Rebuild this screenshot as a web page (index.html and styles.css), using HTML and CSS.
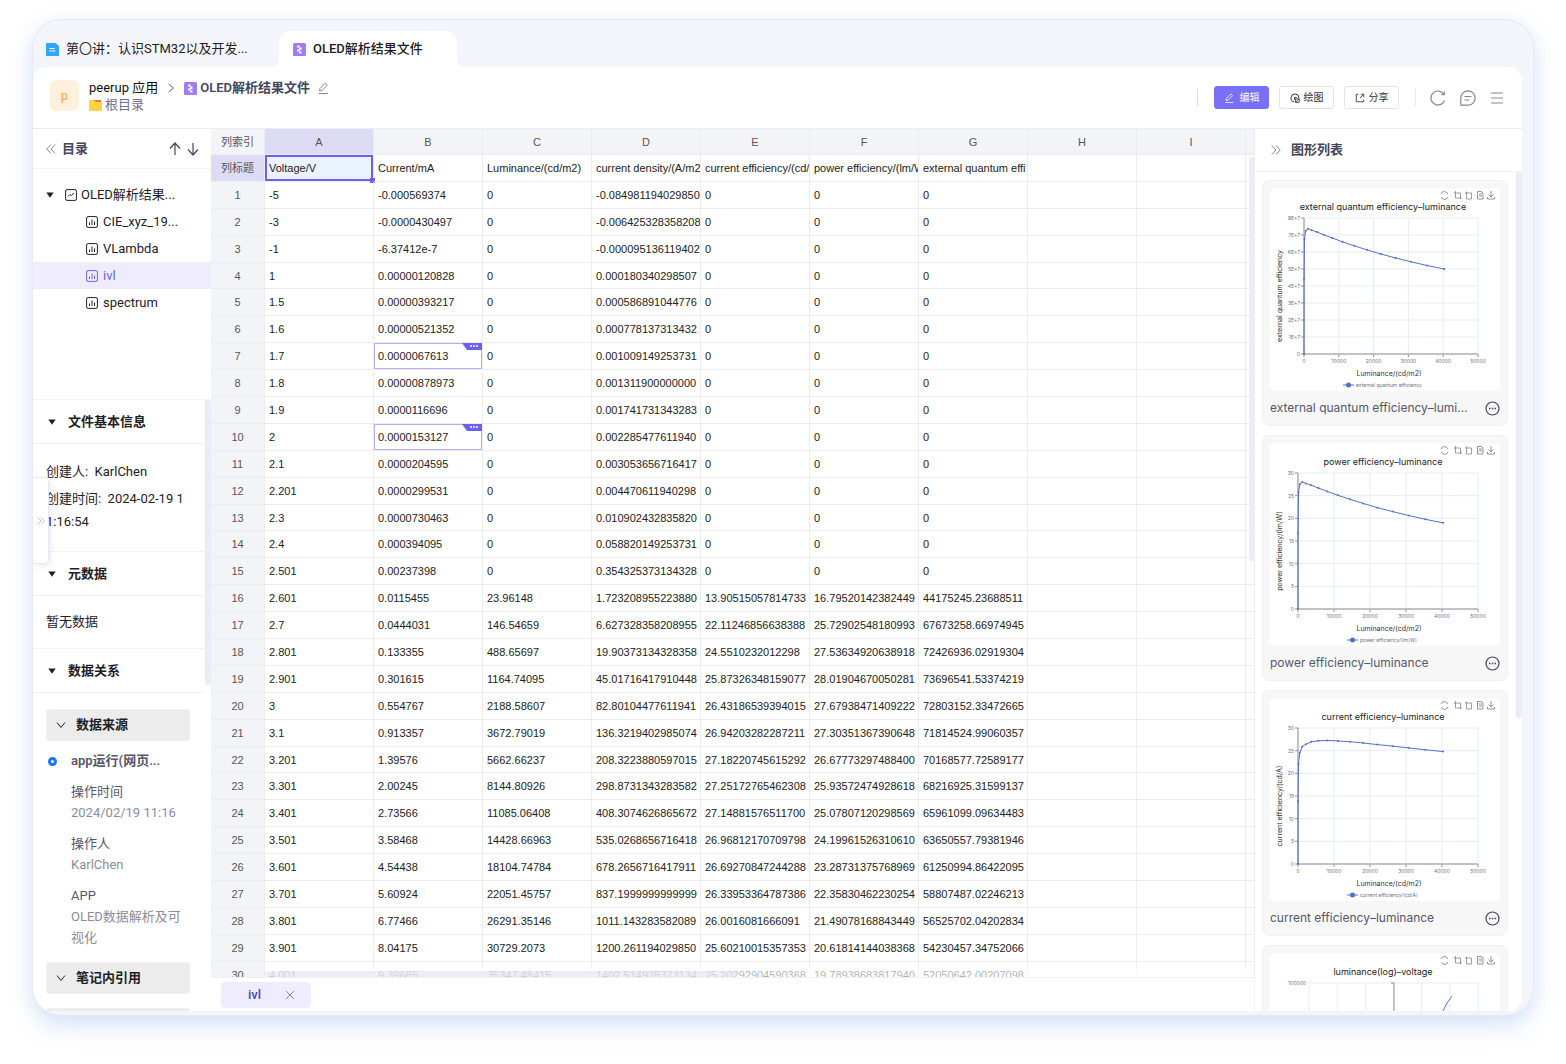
FILE: index.html
```html
<!DOCTYPE html>
<html lang="zh-CN">
<head>
<meta charset="utf-8">
<title>OLED解析结果文件</title>
<meta name="viewport" content="width=device-width, initial-scale=1">
<link rel="stylesheet" href="styles.css">
</head>
<body>
<svg class="defs" aria-hidden="true">
  <symbol id="i-file" viewBox="0 0 13 13"><path d="M1 0h8.500L13 3v9a1 1 0 0 1-1 1H1a1 1 0 0 1-1-1V1a1 1 0 0 1 1-1z" fill="#30a5fb"/><path d="M3.500 5.500h5M3.500 8h6" stroke="#fff" fill="none"/></symbol>
  <symbol id="i-data" viewBox="0 0 13 13"><rect width="13" height="13" rx="1.500" fill="#a07bfb"/><path d="M4 2.500h2.500v2H8.500V7H6.500v1.500h2v2H6v-2H4V6.500h2v-2H4z" fill="#fff"/></symbol>
  <symbol id="i-folder" viewBox="0 0 13 13"><path d="M5 1h7v3H5z" fill="#fb6a55"/><path d="M1 1h4l2 2h5a1 1 0 0 1 1 1v7a1 1 0 0 1-1 1H1a1 1 0 0 1-1-1V2a1 1 0 0 1 1-1z" fill="#fed53f"/></symbol>
  <symbol id="i-pencil" viewBox="0 0 12 12"><path d="M1.500 11.500h9.500M2.500 9l.5-2.500L8.300 1.200l2 2L5 8.500z" fill="none" stroke="currentColor" stroke-linejoin="round"/></symbol>
  <symbol id="i-plot" viewBox="0 0 12 12"><path d="M5 10.700A4.800 4.800 0 1 1 10.800 6M5.500 8V5.500h2.500" fill="none" stroke="currentColor" stroke-width="1.200"/><path d="M6.700 7h4.300v4.200H6.700zM6.700 11l4.300-4" fill="none" stroke="currentColor"/></symbol>
  <symbol id="i-share" viewBox="0 0 12 12"><path d="M4 1.500H1.500v9h9V8M7 1.500h3.500V5M10.200 1.800 6 6" fill="none" stroke="currentColor"/></symbol>
  <symbol id="i-refresh" viewBox="0 0 16 16"><path d="M14 4.500A7 7 0 1 0 14.500 10.500M14.300 1.500v3.200h-3" fill="none" stroke="currentColor" stroke-width="1.200"/></symbol>
  <symbol id="i-comment" viewBox="0 0 16 16"><path d="M8 .8a7.200 7.200 0 1 1 0 14.400H.8V8A7.200 7.200 0 0 1 8 .8zM4.500 6.500h7M4.500 10h4.500" fill="none" stroke="currentColor" stroke-width="1.200"/></symbol>
  <symbol id="i-menu" viewBox="0 0 14 14"><path d="M1 2h12M1 7h12M1 12h12" stroke="currentColor" stroke-width="1.200"/></symbol>
  <symbol id="i-dleft" viewBox="0 0 10 10"><path d="M5 .5.8 5 5 9.500M9.200.5 5 5l4.200 4.500" fill="none" stroke="currentColor"/></symbol>
  <symbol id="i-dright" viewBox="0 0 10 10"><path d="M.8.500 5 5 .8 9.500M5 .5 9.200 5 5 9.500" fill="none" stroke="currentColor"/></symbol>
  <symbol id="i-right" viewBox="0 0 8 10"><path d="M1.500 1 6.500 5l-5 4" fill="none" stroke="currentColor"/></symbol>
  <symbol id="i-down" viewBox="0 0 10 10"><path d="M1 2.500 5 7.500l4-5" fill="none" stroke="currentColor"/></symbol>
  <symbol id="i-up-arrow" viewBox="0 0 12 14"><path d="M6 13V1M1 6.500 6 1l5 5.500" fill="none" stroke="currentColor" stroke-width="1.200"/></symbol>
  <symbol id="i-down-arrow" viewBox="0 0 12 14"><path d="M6 1v12M1 7.500 6 13l5-5.500" fill="none" stroke="currentColor" stroke-width="1.200"/></symbol>
  <symbol id="i-caret" viewBox="0 0 8 6"><path d="M.3.500h7.400L4 5.800z" fill="currentColor"/></symbol>
  <symbol id="i-line" viewBox="0 0 12 12"><rect x=".6" y=".6" width="10.800" height="10.800" rx="1.500" fill="none" stroke="currentColor"/><path d="M3 7.500 5 5.500l1.500 1L9 4.200" fill="none" stroke="currentColor"/></symbol>
  <symbol id="i-bars" viewBox="0 0 12 12"><rect x=".6" y=".6" width="10.800" height="10.800" rx="1.500" fill="none" stroke="currentColor"/><path d="M3.500 9V6.500M6 9V3.500M8.500 9V5.500" stroke="currentColor"/></symbol>
  <symbol id="i-close" viewBox="0 0 10 10"><path d="m1 1 8 8M9 1 1 9" stroke="currentColor"/></symbol>
  <symbol id="i-more" viewBox="0 0 15 15"><circle cx="7.500" cy="7.500" r="6.500" fill="none" stroke="currentColor" stroke-width="1.200"/><path d="M4 7.500h1.500M6.800 7.500h1.500M9.500 7.500H11" stroke="currentColor" stroke-width="1.500"/></symbol>
  <symbol id="i-note" viewBox="0 0 20 7"><path d="M0 0h20v7H5z" fill="#6c5ff5"/><path d="M8 3h2M11 3h2M14 3h2" stroke="#fff" stroke-width="1.500"/></symbol>
</svg>

<div class="window">
  <nav class="tabs">
    <button class="tab" type="button"><svg class="s13"><use href="#i-file"/></svg><span>第〇讲：认识STM32以及开发...</span></button>
    <button class="tab tab-active" type="button"><svg class="s13"><use href="#i-data"/></svg><span>OLED解析结果文件</span></button>
  </nav>

  <div class="panel">
    <header class="header">
      <span class="avatar">p</span>
      <div class="crumbs">
        <div class="crumb-row">
          <a class="crumb-home" href="#">peerup 应用</a>
          <svg class="crumb-sep"><use href="#i-right"/></svg>
          <svg class="s13"><use href="#i-data"/></svg>
          <h1 class="doc-title">OLED解析结果文件</h1>
          <button class="bare" type="button" aria-label="重命名"><svg class="s12"><use href="#i-pencil"/></svg></button>
        </div>
        <a class="crumb-root" href="#"><svg class="s13"><use href="#i-folder"/></svg>根目录</a>
      </div>
      <div class="actions">
        <span class="divider divider-blue"></span>
        <button class="btn btn-primary" type="button"><svg class="s10"><use href="#i-pencil"/></svg>编辑</button>
        <button class="btn" type="button"><svg class="s10"><use href="#i-plot"/></svg>绘图</button>
        <button class="btn" type="button"><svg class="s10"><use href="#i-share"/></svg>分享</button>
        <span class="divider"></span>
        <button class="bare" type="button" aria-label="刷新"><svg class="s16"><use href="#i-refresh"/></svg></button>
        <button class="bare" type="button" aria-label="评论"><svg class="s16"><use href="#i-comment"/></svg></button>
        <button class="bare" type="button" aria-label="菜单"><svg class="s14"><use href="#i-menu"/></svg></button>
      </div>
    </header>

    <div class="workspace">
      <aside class="sidebar">
        <div class="side-head">
          <button class="bare" type="button" aria-label="收起目录"><svg class="s10"><use href="#i-dleft"/></svg></button>
          <h2 class="side-title">目录</h2>
          <button class="bare dark" type="button" aria-label="上移"><svg class="arrow"><use href="#i-up-arrow"/></svg></button>
          <button class="bare dark" type="button" aria-label="下移"><svg class="arrow"><use href="#i-down-arrow"/></svg></button>
        </div>
        <ul class="tree">
          <li><a class="node node-root" href="#"><svg class="caret"><use href="#i-caret"/></svg><svg class="s12"><use href="#i-line"/></svg>OLED解析结果...</a></li>
          <li><a class="node" href="#"><svg class="s12"><use href="#i-bars"/></svg>CIE_xyz_19...</a></li>
          <li><a class="node" href="#"><svg class="s12"><use href="#i-bars"/></svg>VLambda</a></li>
          <li><a class="node node-active" href="#"><svg class="s12"><use href="#i-bars"/></svg>ivl</a></li>
          <li><a class="node" href="#"><svg class="s12"><use href="#i-bars"/></svg>spectrum</a></li>
        </ul>
        <div class="details">
          <div class="details-body">
            <h3 class="section-head"><svg class="caret"><use href="#i-caret"/></svg>文件基本信息</h3>
            <div class="section section-info">
              <p>创建人:&nbsp; KarlChen</p>
              <p class="break">创建时间:&nbsp; 2024-02-19 11:16:54</p>
            </div>
            <h3 class="section-head"><svg class="caret"><use href="#i-caret"/></svg>元数据</h3>
            <div class="section section-empty"><p>暂无数据</p></div>
            <h3 class="section-head"><svg class="caret"><use href="#i-caret"/></svg>数据关系</h3>
            <div class="relations">
              <button class="fold" type="button"><svg class="s10"><use href="#i-down"/></svg>数据来源</button>
              <div class="source">
                <p class="source-name">app运行(网页...</p>
                <dl class="facts">
                  <dt>操作时间</dt><dd>2024/02/19 11:16</dd>
                  <dt>操作人</dt><dd>KarlChen</dd>
                  <dt>APP</dt><dd>OLED数据解析及可视化</dd>
                </dl>
              </div>
              <button class="fold" type="button"><svg class="s10"><use href="#i-down"/></svg>笔记内引用</button>
              <div class="fold"></div>
            </div>
          </div>
          <span class="thumb thumb-side"></span>
        </div>
      </aside>

      <main class="sheet">
        <div class="grid-wrap">
          <table class="grid">
            <colgroup><col class="c-index"><col class="c-data" span="9"><col></colgroup>
            <thead id="grid-head"></thead>
            <tbody id="grid-body"></tbody>
          </table>
          <span class="thumb thumb-sheet"></span>
          <div class="track-x"><span class="thumb thumb-x"></span></div>
        </div>
        <footer class="sheet-tabs">
          <div class="sheet-tab"><a href="#">ivl</a><button class="bare" type="button" aria-label="关闭"><svg class="s10"><use href="#i-close"/></svg></button></div>
        </footer>
      </main>

      <aside class="charts">
        <div class="charts-head">
          <button class="bare" type="button" aria-label="收起图形列表"><svg class="s10"><use href="#i-dright"/></svg></button>
          <h2 class="side-title">图形列表</h2>
        </div>
        <div class="charts-scroll">
          <div class="chart-list" id="chart-list"></div>
          <span class="thumb thumb-charts"></span>
        </div>
      </aside>
    </div>
    <button class="drawer-handle" type="button" aria-label="展开"><svg class="s8"><use href="#i-dright"/></svg></button>
  </div>
</div>
<script src="script.js"></script>
</body>
</html>
```
FILE: styles.css
```css
*, *::before, *::after { box-sizing: border-box; }

body {
  margin: 0;
  height: 100vh;
  padding: 20px 33px 49px;
  display: flex;
  background: #fff;
  color: #1f2026;
  font: 13px/20px Roboto, "Noto Sans CJK SC", sans-serif;
}

h1, h2, h3, p, ul, dl, dd { margin: 0; padding: 0; }
h1, h2, h3 { font-size: 13px; font-weight: 600; }
a { color: inherit; text-decoration: none; }
button { font: inherit; color: inherit; cursor: pointer; }
svg { display: block; flex: none; }

.defs { display: none; }
.s8 { width: 8px; height: 8px; }
.s10 { width: 10px; height: 10px; }
.s12 { width: 12px; height: 12px; }
.s13 { width: 13px; height: 13px; }
.s14 { width: 14px; height: 14px; }
.s16 { width: 16px; height: 16px; }
.caret { width: 8px; height: 6px; }
.arrow { width: 12px; height: 14px; }

.bare {
  display: flex;
  padding: 0;
  border: 0;
  background: none;
  color: #84859a;
}
.dark { color: #44465a; }

.thumb {
  position: absolute;
  width: 6px;
  border-radius: 3px;
  background: #ecebf7;
}

/* Window frame */
.window {
  flex: 1;
  min-width: 0;
  display: flex;
  flex-direction: column;
  padding: 0 11px 4px 0;
  border-radius: 28px;
  overflow: hidden;
  background: #f4f5fb;
  box-shadow: 0 0 0 1px #e6eaf4, 0 12px 24px rgba(110, 155, 225, 0.24), 0 0 20px rgba(110, 155, 225, 0.1);
}

.tabs {
  display: flex;
  height: 47px;
  padding: 11px 0 0;
}
.tab {
  width: 246px;
  display: flex;
  align-items: center;
  gap: 7px;
  padding: 0 13px;
  border: 0;
  background: none;
  white-space: nowrap;
}
.tab-active {
  position: relative;
  width: 178px;
  padding: 0 14px;
  border-radius: 12px 12px 0 0;
  background: #fff;
  font-weight: 500;
}
.tab-active::before,
.tab-active::after {
  content: "";
  position: absolute;
  bottom: 0;
  width: 8px;
  height: 8px;
}
.tab-active::before { right: 100%; background: radial-gradient(circle at 0 0, transparent 8px, #fff 8px); }
.tab-active::after { left: 100%; background: radial-gradient(circle at 100% 0, transparent 8px, #fff 8px); }

.panel {
  position: relative;
  flex: 1;
  min-height: 0;
  display: flex;
  flex-direction: column;
  border-radius: 14px;
  overflow: hidden;
  background: #fff;
}

/* Header */
.header {
  display: flex;
  gap: 10px;
  height: 62px;
  padding: 13px 18px 0 17px;
  border-bottom: 1px solid #ecebf7;
}
.avatar {
  width: 29px;
  height: 31px;
  border-radius: 6px;
  background: #fff0de;
  color: #ffb055;
  font-weight: 500;
  line-height: 31px;
  text-align: center;
}
.crumbs { flex: 1; }
.crumb-row { display: flex; align-items: center; height: 16px; }
.crumb-home { color: #111; }
.crumb-sep { width: 8px; height: 10px; margin: 0 9px; color: #6a6b80; }
.doc-title { margin: 0 7px 0 3px; color: #44465a; }
.crumb-root {
  display: flex;
  align-items: center;
  gap: 3px;
  height: 18px;
  color: #6f7189;
}
.actions {
  display: flex;
  align-items: center;
  align-self: flex-start;
  height: 35px;
}
.divider { width: 1px; height: 17px; margin: 0 14px 0 6px; background: #e8e8ee; }
.divider-blue { margin-right: 16px; background: #d5dcf6; }
.btn {
  display: flex;
  align-items: center;
  justify-content: center;
  gap: 4px;
  width: 55px;
  height: 23px;
  margin-right: 10px;
  padding: 0;
  border: 1px solid #e3e3e8;
  border-radius: 3px;
  background: #fff;
  color: #333;
  font-size: 10px;
}
.btn-primary { gap: 6px; border-color: #7a6ff8; background: #7a6ff8; color: #fff; }
.actions .bare { margin-right: 14px; }
.actions .bare:last-child { margin-right: 0; }

/* Workspace */
.workspace { flex: 1; min-height: 0; display: flex; }

.sidebar {
  width: 178px;
  display: flex;
  flex-direction: column;
  background: #fff;
}
.side-head {
  display: flex;
  align-items: center;
  gap: 6px;
  height: 40px;
  padding: 0 12px 0 13px;
  border-bottom: 1px solid #f3f3f5;
}
.side-title { color: #44465a; }
.side-head .side-title { flex: 1; }
.tree { height: 230px; padding-top: 12px; list-style: none; flex: none; }
.node {
  display: flex;
  align-items: center;
  gap: 5px;
  height: 27px;
  padding-left: 53px;
  white-space: nowrap;
}
.node-root { padding-left: 13px; gap: 4px; }
.node-root .caret { margin-right: 7px; }
.node-active { background: #efedfd; color: #6c5ff5; }

.details { position: relative; flex: 1; min-height: 0; overflow: hidden; }
.details-body { margin-right: 6px; border-top: 1px solid #f3f3f5; }
.thumb-side { top: 0; right: 0; height: 286px; }
.section-head {
  display: flex;
  align-items: center;
  gap: 12px;
  height: 44px;
  padding-left: 15px;
  border-bottom: 1px solid #f3f3f5;
}
.section { padding: 0 13px; border-bottom: 1px solid #f3f3f5; }
.section-info { height: 108px; padding-top: 16px; line-height: 23px; }
.section-info p + p { margin-top: 4px; }
.break { word-break: break-all; }
.section-empty { height: 53px; line-height: 52px; }

.relations { padding: 16px 14px 0 13px; }
.fold {
  display: flex;
  align-items: center;
  gap: 10px;
  width: 144px;
  height: 32px;
  margin-bottom: 14px;
  padding: 0 9px;
  border: 1px solid #f0f0f0;
  border-radius: 3px;
  background: #ececec;
  font-weight: 600;
}
.source { margin-top: -4px; padding: 0 0 14px 25px; color: #55576b; }
.source-name { display: flex; align-items: center; height: 20px; font-weight: 600; white-space: nowrap; }
.source-name::before {
  content: "";
  width: 9px;
  height: 9px;
  margin: 0 14px 0 -23px;
  border: 3px solid #1677ff;
  border-radius: 50%;
}
.facts { line-height: 21px; }
.facts dt { margin-top: 10px; }
.facts dd { color: #8b8c9c; }

.drawer-handle {
  position: absolute;
  left: 0;
  top: 410px;
  width: 16px;
  height: 87px;
  display: flex;
  align-items: center;
  justify-content: center;
  padding: 0;
  border: 1px solid #e8e8f2;
  border-left: 0;
  border-radius: 0 5px 5px 0;
  background: #fff;
  box-shadow: 2px 2px 6px rgba(90, 90, 140, 0.12);
  color: #a9abc4;
}

/* Spreadsheet */
.sheet { flex: 1; min-width: 0; display: flex; flex-direction: column; }
.grid-wrap { position: relative; flex: 1; min-height: 0; overflow: hidden; }
.grid {
  width: 100%;
  height: 860px;
  table-layout: fixed;
  border-collapse: separate;
  border-spacing: 0;
  font: 11px/20px "Liberation Sans", sans-serif;
  color: #222;
}
.grid tr { height: 26px; }
.c-index { width: 54px; }
.c-data { width: 109px; }
.grid th, .grid td {
  position: relative;
  padding: 0 0 0 4px;
  border: solid #ececee;
  border-width: 0 1px 1px 0;
  overflow: hidden;
  white-space: nowrap;
  text-align: left;
  vertical-align: middle;
}
.grid th {
  padding: 0;
  background: #f3f4f8;
  color: #55565c;
  font: 11px/20px "Liberation Sans", "Noto Sans CJK SC", sans-serif;
  text-align: center;
}
.grid .head-active { background: #dedcf5; }
.grid .cell-active { overflow: visible; background: #ebf3ff; box-shadow: inset 0 0 0 2px #6c5ff5; }
.cell-active::after {
  content: "";
  position: absolute;
  right: -2px;
  bottom: -2px;
  width: 5px;
  height: 5px;
  background: #6c5ff5;
}
.grid .cell-note { box-shadow: inset 0 0 0 1px #b5adf9; }
.note-tag {
  position: absolute;
  top: 0;
  right: 0;
  width: 20px;
  height: 7px;
}
.thumb-sheet { top: 28px; right: 0; height: 404px; }
.track-x {
  position: absolute;
  left: 54px;
  right: 6px;
  bottom: 0;
  height: 9px;
  background: rgba(255, 255, 255, 0.65);
}
.thumb-x { left: 0; bottom: 0; width: 48%; height: 6px; background: rgba(228, 227, 243, 0.6); }
.sheet-tabs {
  display: flex;
  align-items: center;
  height: 34px;
  padding-left: 10px;
  border: solid #f0f0f4;
  border-width: 1px 1px 0 0;
}
.sheet-tab {
  display: flex;
  align-items: center;
  gap: 24px;
  width: 90px;
  height: 26px;
  padding-left: 27px;
  border-radius: 4px;
  background: #efedfd;
  color: #4b43b8;
  font-weight: 500;
}

/* Chart list */
.charts { width: 267px; display: flex; flex-direction: column; background: #fff; }
.charts-head {
  display: flex;
  align-items: center;
  gap: 10px;
  height: 43px;
  padding: 0 16px;
  border-bottom: 1px solid #f3f3f5;
}
.charts-scroll { position: relative; flex: 1; min-height: 0; overflow: hidden; }
.thumb-charts { top: 0; right: 0; height: 546px; }
.chart-list {
  display: grid;
  grid-template-columns: minmax(0, 1fr);
  gap: 9px;
  padding: 8px 14px 0 7px;
}
.card {
  height: 246px;
  padding: 7px;
  border: 1px solid #f1f1f3;
  border-radius: 7px;
  background: #f7f7f8;
}
.plot { width: 100%; border-radius: 5px; background: #fff; font-family: Inter, sans-serif; }
.caption { display: flex; align-items: center; gap: 12px; height: 34px; }
.caption-text {
  flex: 1;
  overflow: hidden;
  text-overflow: ellipsis;
  white-space: nowrap;
  color: #55576b;
  font: 12px/30px Inter, sans-serif;
}
.caption .bare { color: #44465a; }
.more { width: 15px; height: 15px; }
.plot-title { font-size: 9px; fill: #222; }
.plot-name { font-size: 7px; fill: #333; }
.plot-tick { font-size: 5px; fill: #6e7079; }
.plot-grid { fill: none; stroke: #e6ebf7; }
.plot-axis { fill: none; stroke: #8e9097; }
.plot-line { fill: none; stroke: #5470c6; }
.plot-dot { fill: #5470c6; }
.plot-tools { fill: none; stroke: #777; }
```
FILE: script.js
```js
const titles = ['Voltage/V', 'Current/mA', 'Luminance/(cd/m2)', 'current density/(A/m2)', 'current efficiency/(cd/A)', 'power efficiency/(lm/W)', 'external quantum effi'];

const rows = `-5 -0.000569374 0 -0.084981194029850 0 0 0
-3 -0.0000430497 0 -0.006425328358208 0 0 0
-1 -6.37412e-7 0 -0.000095136119402 0 0 0
1 0.00000120828 0 0.000180340298507 0 0 0
1.5 0.00000393217 0 0.000586891044776 0 0 0
1.6 0.00000521352 0 0.000778137313432 0 0 0
1.7 0.0000067613 0 0.001009149253731 0 0 0
1.8 0.00000878973 0 0.001311900000000 0 0 0
1.9 0.0000116696 0 0.001741731343283 0 0 0
2 0.0000153127 0 0.002285477611940 0 0 0
2.1 0.0000204595 0 0.003053656716417 0 0 0
2.201 0.0000299531 0 0.004470611940298 0 0 0
2.3 0.0000730463 0 0.010902432835820 0 0 0
2.4 0.000394095 0 0.058820149253731 0 0 0
2.501 0.00237398 0 0.354325373134328 0 0 0
2.601 0.0115455 23.96148 1.723208955223880 13.90515057814733 16.79520142382449 44175245.23688511
2.7 0.0444031 146.54659 6.627328358208955 22.11246856638388 25.72902548180993 67673258.66974945
2.801 0.133355 488.65697 19.90373134328358 24.5510232012298 27.53634920638918 72426936.02919304
2.901 0.301615 1164.74095 45.01716417910448 25.87326348159077 28.01904670050281 73696541.53374219
3 0.554767 2188.58607 82.80104477611941 26.43186539394015 27.67938471409222 72803152.33472665
3.1 0.913357 3672.79019 136.3219402985074 26.94203282287211 27.30351367390648 71814524.99060357
3.201 1.39576 5662.66237 208.3223880597015 27.18220745615292 26.67773297488400 70168577.72589177
3.301 2.00245 8144.80926 298.8731343283582 27.25172765462308 25.93572474928618 68216925.31599137
3.401 2.73566 11085.06408 408.3074626865672 27.14881576511700 25.07807120298569 65961099.09634483
3.501 3.58468 14428.66963 535.0268656716418 26.96812170709798 24.19961526310610 63650557.79381946
3.601 4.54438 18104.74784 678.2656716417911 26.69270847244288 23.28731375768969 61250994.86422095
3.701 5.60924 22051.45757 837.1999999999999 26.33953364787386 22.35830462230254 58807487.02246213
3.801 6.77466 26291.35146 1011.143283582089 26.0016081666091 21.49078168843449 56525702.04202834
3.901 8.04175 30729.2073 1200.261194029850 25.60210015357353 20.61814144038368 54230457.34752066
4.001 9.39685 35347.48415 1402.514925373134 25.20292904590368 19.78938683817940 52050642.00207098`.split('\n').map(r => r.split(' '));

document.getElementById('grid-head').innerHTML =
  '<tr><th scope="col">列索引</th>' +
  [...'ABCDEFGHI'].map((c, i) => `<th scope="col"${i ? '' : ' class="head-active"'}>${c}</th>`).join('') +
  '<th></th></tr>';

const blanks = '<td></td>'.repeat(3);
document.getElementById('grid-body').innerHTML =
  '<tr><th scope="row" class="head-active">列标题</th>' +
  titles.map((t, i) => `<td${i ? '' : ' class="cell-active"'}>${t}</td>`).join('') + blanks + '</tr>' +
  rows.map((r, n) => `<tr><th scope="row">${n + 1}</th>` + r.map((v, c) =>
    c === 1 && (n === 6 || n === 9) ? `<td class="cell-note">${v}<svg class="note-tag"><use href="#i-note"/></svg></td>` : `<td>${v}</td>`
  ).join('') + blanks + '</tr>').join('');

const plotTop = 30, plotBottom = 166, plotRight = 208;
const tools = `<g class="plot-tools">
<path d="M171 6a3.600 3.600 0 0 1 6.800 0M178 9a3.600 3.600 0 0 1-6.800 0" stroke-width=".8"/>
<path d="M183.500 5h7v6M185.500 3v7h6.500" stroke-width=".7"/>
<path d="M195 5h6.500v6h-5V3.500" stroke-width=".7"/>
<path d="M207.500 3.500h4l1.500 1.500v6h-5.500zM209 6h3M209 8h3" stroke-width=".8"/>
<path d="M221 3v5.500M218.500 6.500l2.500 2.500 2.500-2.500M217.500 9v2h7V9" stroke-width=".8"/></g>`;

function luminancePlot(c) {
  const x = v => c.left + v / 50000 * (plotRight - c.left);
  const y = v => plotBottom - v / c.max * (plotBottom - plotTop);
  let s = '';
  for (let i = 0; i <= 5; i++) {
    const px = x(i * 10000);
    s += `<path class="plot-grid" d="M${px} ${plotTop}V${plotBottom}"/><path class="plot-axis" d="M${px} ${plotBottom}v3"/><text class="plot-tick" x="${px}" y="175" text-anchor="middle">${i * 10000}</text>`;
  }
  c.ticks.forEach((t, i) => {
    const py = plotBottom - i * (plotBottom - plotTop) / (c.ticks.length - 1);
    s += `<path class="plot-grid" d="M${c.left} ${py}H${plotRight}"/><path class="plot-axis" d="M${c.left - 3} ${py}h3"/><text class="plot-tick" x="${c.left - 4}" y="${py + 2}" text-anchor="end">${t}</text>`;
  });
  s += `<path class="plot-axis" d="M${c.left} ${plotTop}V${plotBottom}H${plotRight}"/>`;
  const pts = [[0, 0], ...rows.slice(15).map(r => [+r[2], +r[c.col]]), c.last];
  s += `<polyline class="plot-line" points="${pts.map(p => x(p[0]) + ',' + y(p[1])).join(' ')}"/>`;
  s += pts.map(p => `<circle class="plot-dot" cx="${x(p[0])}" cy="${y(p[1])}" r="1"/>`).join('');
  s += `<text class="plot-name" x="119" y="188" text-anchor="middle">Luminance/(cd/m2)</text>`;
  s += `<text class="plot-name" transform="translate(12 108) rotate(-90)" text-anchor="middle">${c.name}</text>`;
  s += `<path class="plot-line" d="M${c.legend} 197h11"/><circle class="plot-dot" cx="${c.legend + 5.5}" cy="197" r="2.500"/><text class="plot-tick" x="${c.legend + 13}" y="199">${c.name}</text>`;
  return s;
}

function voltagePlot() {
  let s = '<text class="plot-tick" x="36" y="32" text-anchor="end">100000</text><path class="plot-grid" d="M39 30H208"/>';
  for (let i = 0; i <= 6; i++) s += `<path class="plot-grid" d="M${39 + i * 28.2} 30V166"/>`;
  return s + '<path class="plot-axis" d="M121 30h3V166"/><path class="plot-line" d="M168 72L173 58L177 50L182 43"/>';
}

const tens = ['0', '5', '10', '15', '20', '25', '30'];
const charts = [
  { title: 'external quantum efficiency–luminance', name: 'external quantum efficiency', col: 6, left: 34, max: 8e7, ticks: ['0', '1E+7', '2E+7', '3E+7', '4E+7', '5E+7', '6E+7', '7E+7', '8E+7'], last: [40300, 5e7], legend: 73 },
  { title: 'power efficiency–luminance', name: 'power efficiency/(lm/W)', col: 5, left: 28, max: 30, ticks: tens, last: [40300, 19], legend: 77 },
  { title: 'current efficiency–luminance', name: 'current efficiency/(cd/A)', col: 4, left: 28, max: 30, ticks: tens, last: [40300, 24.8], legend: 77 },
  { title: 'luminance(log)–voltage' }
];

document.getElementById('chart-list').innerHTML = charts.map(c => `<article class="card">
<svg class="plot" viewBox="0 0 230 203" role="img" aria-label="${c.title}">${tools}
<text class="plot-title" x="113" y="22" text-anchor="middle">${c.title}</text>${c.name ? luminancePlot(c) : voltagePlot()}</svg>
<div class="caption"><span class="caption-text">${c.title}</span><button class="bare" type="button" aria-label="更多"><svg class="more"><use href="#i-more"/></svg></button></div>
</article>`).join('');
```
